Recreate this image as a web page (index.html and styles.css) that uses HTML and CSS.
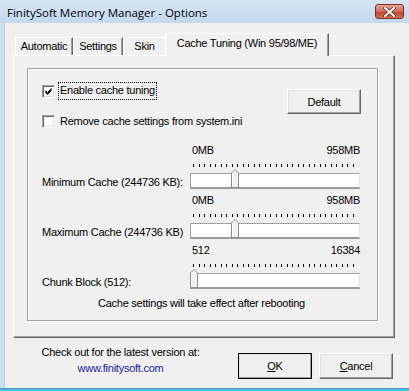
FILE: index.html
```html
<html><head><meta charset="utf-8">
    <link rel="stylesheet" href="styles.css">
</head>
<body>
<div class="window">
    <div class="titlebar">
        <span class="title">FinitySoft Memory Manager - Options</span>
        <span class="closeBtn">
            <svg width="13" height="10" viewBox="0 0 13 10">
                <path d="M2 1 L11 9 M11 1 L2 9" stroke="#5a2a22" stroke-width="3.4" stroke-linecap="square"/>
                <path d="M2 1 L11 9 M11 1 L2 9" stroke="#fff" stroke-width="2" stroke-linecap="square"/>
            </svg>
        </span>
    </div>

    <div class="frame">
        <div class="client">
            <!-- tab strip -->
            <div class="tabs">
                <span class="tab tabAutomatic">Automatic</span>
                <span class="tab tabSettings">Settings</span>
                <span class="tab tabSkin">Skin</span>
                <span class="tab tabActive">Cache Tuning (Win 95/98/ME)</span>
            </div>

            <div class="panel">
                <div class="group">
                    <div class="topRow">
                        <div class="checks">
                            <label class="check">
                                <span class="box">
                                    <svg width="9" height="9" viewBox="0 0 9 9"><path d="M1.5 3.5 L3.5 5.5 L7.5 1.5 M1.5 4.5 L3.5 6.5 L7.5 2.5 M1.5 5.5 L3.5 7.5 L7.5 3.5" stroke="#000" stroke-width="1" fill="none"/></svg>
                                </span>
                                <span class="focusText">Enable cache tuning</span>
                            </label>
                            <label class="check">
                                <span class="box"></span>
                                <span class="checkText">Remove cache settings from system.ini</span>
                            </label>
                        </div>
                        <button class="btn defaultBtn">Default</button>
                    </div>

                    <!-- sliders -->
                    <div class="sliderRow firstSlider">
                        <span class="sliderLabel">Minimum Cache (244736 KB):</span>
                        <div class="slider">
                            <div class="scale"><span>0MB</span><span>958MB</span></div>
                            <div class="ticks"></div>
                            <div class="track">
                                <svg class="thumb" style="left: 40px" width="8" height="19" viewBox="0 0 8 19"><path d="M0.5 18.5 L0.5 4 L4 0.5 L7.5 4 L7.5 18.5 Z" fill="#f0f0f0" stroke="#8c8c8c"/><path d="M1.5 17.5 L1.5 4.4 L4 1.9" stroke="#fff" fill="none"/></svg>
                            </div>
                        </div>
                    </div>
                    <div class="sliderRow">
                        <span class="sliderLabel">Maximum Cache (244736 KB)</span>
                        <div class="slider">
                            <div class="scale"><span>0MB</span><span>958MB</span></div>
                            <div class="ticks"></div>
                            <div class="track">
                                <svg class="thumb" style="left: 40px" width="8" height="19" viewBox="0 0 8 19"><path d="M0.5 18.5 L0.5 4 L4 0.5 L7.5 4 L7.5 18.5 Z" fill="#f0f0f0" stroke="#8c8c8c"/><path d="M1.5 17.5 L1.5 4.4 L4 1.9" stroke="#fff" fill="none"/></svg>
                            </div>
                        </div>
                    </div>
                    <div class="sliderRow">
                        <span class="sliderLabel">Chunk Block (512):</span>
                        <div class="slider">
                            <div class="scale"><span>512</span><span>16384</span></div>
                            <div class="ticks"></div>
                            <div class="track">
                                <svg class="thumb" style="left: -1px" width="8" height="19" viewBox="0 0 8 19"><path d="M0.5 18.5 L0.5 4 L4 0.5 L7.5 4 L7.5 18.5 Z" fill="#f0f0f0" stroke="#8c8c8c"/><path d="M1.5 17.5 L1.5 4.4 L4 1.9" stroke="#fff" fill="none"/></svg>
                            </div>
                        </div>
                    </div>

                    <p class="note">Cache settings will take effect after rebooting</p>
                </div>
            </div>

            <div class="footer">
                <div class="linkBox">
                    <div>Check out for the latest version at:</div>
                    <a class="siteLink" href="#">www.finitysoft.com</a>
                </div>
                <div class="buttons">
                    <button class="btn okBtn"><u>O</u>K</button>
                    <button class="btn cancelBtn"><u>C</u>ancel</button>
                </div>
            </div>
        </div>
    </div>
    <div class="bottomEdge"></div>
</div>
</body></html>
```

FILE: styles.css
```css
body {
    margin: 0;
    font-family: "Liberation Sans", Arial, sans-serif;
    font-size: 11px;
    letter-spacing: -0.25px;
    line-height: 13px;
    color: #000;
}

.window {
    width: 409px;
    height: 391px;
    display: flex;
    flex-direction: column;
    overflow: hidden;
}

/* title bar */
.titlebar {
    height: 23px;
    flex: none;
    display: flex;
    justify-content: space-between;
    align-items: flex-start;
    padding-left: 7px;
    background: linear-gradient(#d6e5f5, #c3d8ee);
    box-sizing: border-box;
}

.title {
    font-family: "Open Sans", "Noto Sans", sans-serif;
    font-size: 11.5px;
    letter-spacing: 0;
    line-height: 16px;
    margin-top: 5px;
}

.closeBtn {
    width: 29px;
    height: 15px;
    margin-top: 4px;
    margin-right: 5px;
    box-sizing: border-box;
    border: 1px solid #7a2f28;
    border-radius: 3px;
    background: linear-gradient(#e8a493, #d06a56 50%, #c0432e 51%, #d0704f);
    display: flex;
    justify-content: center;
    align-items: center;
}

.frame {
    flex: 1;
    display: flex;
    padding-left: 4px;
    background: #cddff2;
}

.client {
    flex: 1;
    background: #f0f0f0;
    border-left: 1px solid #b8cbe0;
}

/* tabs */
.tabs {
    display: flex;
    align-items: flex-end;
    height: 22px;
    margin: 10px 0 0 8px;
    padding-left: 2px;
}

.tab {
    height: 18px;
    box-sizing: border-box;
    text-align: center;
    padding-top: 2px;
    border-top: 1px solid #fff;
    border-left: 1px solid #fff;
    border-right: 1px solid #696969;
    box-shadow: inset -1px 0 #a0a0a0;
}

.tabAutomatic { width: 58px; }
.tabSettings { width: 50px; }
.tabSkin { width: 42px; border-right: none; box-shadow: none; }

.tabActive {
    width: 164px;
    height: 23px;
    margin-bottom: -1px;
    padding-top: 3px;
    position: relative;
    background: #f0f0f0;
}

.panel {
    width: 382px;
    height: 283px;
    box-sizing: border-box;
    margin-left: 8px;
    border-top: 1px solid #fff;
    border-left: 1px solid #fff;
    border-right: 1px solid #696969;
    border-bottom: 1px solid #696969;
    box-shadow: inset -1px -1px #a0a0a0;
    padding: 12px 0 0 13px;
}

.group {
    width: 351px;
    height: 253px;
    box-sizing: border-box;
    border: 1px solid #a0a0a0;
    box-shadow: 1px 1px #fff, inset 1px 1px #fff;
    padding: 14px 16px 0 14px;
}

.topRow {
    display: flex;
    justify-content: space-between;
    align-items: flex-start;
}

.checks {
    display: flex;
    flex-direction: column;
    gap: 14px;
}

.check {
    display: flex;
    align-items: center;
    height: 16px;
}

.box {
    width: 13px;
    height: 13px;
    box-sizing: border-box;
    border-top: 1px solid #a0a0a0;
    border-left: 1px solid #a0a0a0;
    border-right: 1px solid #fff;
    border-bottom: 1px solid #fff;
    box-shadow: inset 1px 1px #696969, inset -1px -1px #e3e3e3;
    background: #fff;
    display: flex;
    justify-content: center;
    align-items: center;
    margin-right: 4px;
}

.focusText {
    outline: 1px dotted #000;
    padding: 1px 1px 2px 1px;
}

.checkText {
    padding-left: 1px;
}

.btn {
    font-family: "Liberation Sans", Arial, sans-serif;
    font-size: 11px;
    letter-spacing: -0.25px;
    color: #000;
    background: #f0f0f0;
    border-top: 1px solid #fff;
    border-left: 1px solid #fff;
    border-right: 1px solid #696969;
    border-bottom: 1px solid #696969;
    box-shadow: inset -1px -1px #a0a0a0, inset 1px 1px #e3e3e3;
    box-sizing: border-box;
    padding: 0;
}

.defaultBtn {
    width: 74px;
    height: 25px;
    margin-top: 6px;
}

/* sliders */
.sliderRow {
    display: flex;
    align-items: flex-end;
    margin-top: 5px;
}

.firstSlider {
    margin-top: 15px;
}

.sliderLabel {
    width: 148px;
    flex: none;
}

.slider {
    width: 170px;
}

.scale {
    display: flex;
    justify-content: space-between;
    padding-left: 2px;
}

.ticks {
    width: 165px;
    height: 3px;
    margin: 7px 0 0 3px;
    background: repeating-linear-gradient(90deg, #000 0 1px, transparent 1px 5.5px);
}

.track {
    position: relative;
    height: 16px;
    margin-top: 6px;
    box-sizing: border-box;
    background: #fff;
    border-top: 1px solid #a0a0a0;
    border-left: 1px solid #a0a0a0;
    border-right: 1px solid #e3e3e3;
    border-bottom: 2px solid #9a9a9a;
}

.thumb {
    position: absolute;
    top: -5px;
}

.note {
    margin: 8px 0 0 0;
    text-align: center;
}

/* footer */
.footer {
    display: flex;
    justify-content: space-between;
    align-items: flex-start;
    padding-right: 16px;
}

.linkBox {
    width: 161px;
    margin: 8px 0 0 35px;
    text-align: center;
}

.siteLink {
    display: block;
    margin-top: 3px;
    color: #1a1aa6;
    text-decoration: none;
}

.buttons {
    display: flex;
    gap: 7px;
    margin-top: 15px;
}

.okBtn, .cancelBtn {
    width: 74px;
    height: 26px;
}

.okBtn {
    outline: 1px solid #000;
    outline-offset: -1px;
}

.bottomEdge {
    height: 3px;
    flex: none;
    background: #3cc3e4;
    border-top: 1px solid #5d8fb0;
    box-sizing: border-box;
}
```
